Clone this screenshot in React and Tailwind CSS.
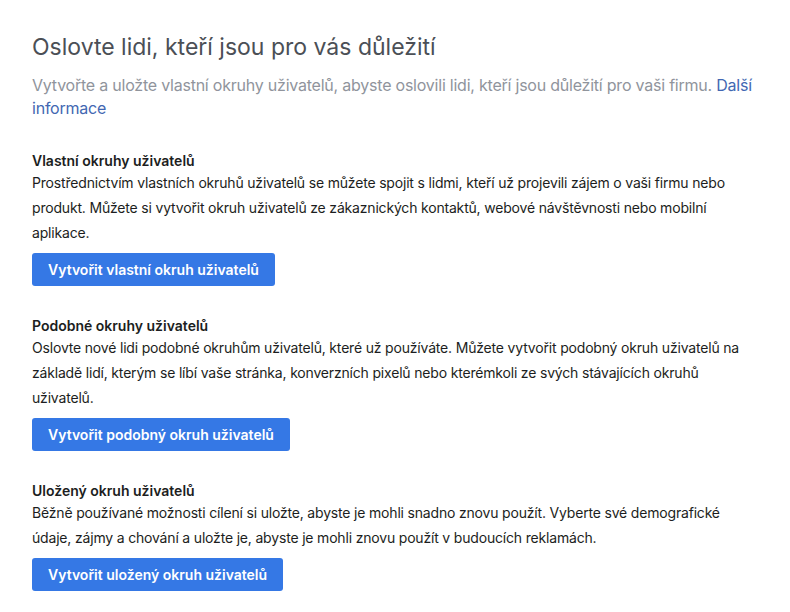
import React from 'react';

const sections = [
    {
        title: 'Vlastní okruhy uživatelů',
        text: 'Prostřednictvím vlastních okruhů uživatelů se můžete spojit s lidmi, kteří už projevili zájem o vaši firmu nebo produkt. Můžete si vytvořit okruh uživatelů ze zákaznických kontaktů, webové návštěvnosti nebo mobilní aplikace.',
        button: 'Vytvořit vlastní okruh uživatelů',
    },
    {
        title: 'Podobné okruhy uživatelů',
        text: 'Oslovte nové lidi podobné okruhům uživatelů, které už používáte. Můžete vytvořit podobný okruh uživatelů na základě lidí, kterým se líbí vaše stránka, konverzních pixelů nebo kterémkoli ze svých stávajících okruhů uživatelů.',
        button: 'Vytvořit podobný okruh uživatelů',
    },
    {
        title: 'Uložený okruh uživatelů',
        text: 'Běžně používané možnosti cílení si uložte, abyste je mohli snadno znovu použít. Vyberte své demografické údaje, zájmy a chování a uložte je, abyste je mohli znovu použít v budoucích reklamách.',
        button: 'Vytvořit uložený okruh uživatelů',
    },
];

const Section = ({ section }) => (
    <div className="mb-[31px]">
        <h2 className="text-[14px] leading-[18px] font-semibold text-[#1c1e21]">{section.title}</h2>
        <p className="text-[14px] leading-[25px] tracking-[-0.013em] text-[#1c1e21]">{section.text}</p>
        <button className="mt-[8px] h-[33px] px-4 bg-[#3578e5] text-white text-[14px] font-semibold rounded-[3px]">
            {section.button}
        </button>
    </div>
);

export default function App() {
    return (
        <div className="w-[790px] h-[612px] bg-white overflow-hidden font-['Inter','Liberation_Sans',sans-serif]">
            <div className="w-[760px] pl-[32px] pt-[33px]">
                <h1 className="text-[23px] leading-[28px] text-[#4b4f56]">Oslovte lidi, kteří jsou pro vás důležití</h1>
                <p className="mt-[13px] text-[16px] leading-[23px] tracking-[-0.014em] text-[#90949c]">
                    Vytvořte a uložte vlastní okruhy uživatelů, abyste oslovili lidi, kteří jsou důležití pro vaši firmu.{' '}
                    <a href="#" className="text-[#4267b2]">Další informace</a>
                </p>
                <div className="mt-[32px]">
                    {sections.map((s) => (
                        <Section key={s.title} section={s} />
                    ))}
                </div>
            </div>
        </div>
    );
}
